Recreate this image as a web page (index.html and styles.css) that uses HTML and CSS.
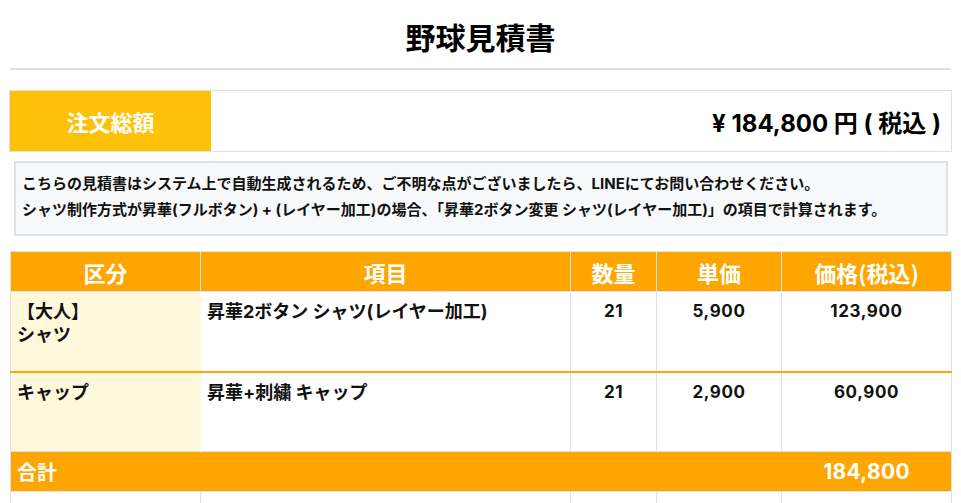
FILE: index.html
```html
<!DOCTYPE html>
<html lang="ja">
<head>
<meta charset="utf-8">
<title>野球見積書</title>
<link rel="stylesheet" href="styles.css">
</head>
<body>
<div class="page">
  <h1 class="title">野球見積書</h1>
  <hr class="rule">
  <div class="total-box">
    <div class="total-label">注文総額</div>
    <div class="total-value">¥ 184,800 円 ( 税込 )</div>
  </div>
  <div class="notice">
    <p>こちらの見積書はシステム上で自動生成されるため、ご不明な点がございましたら、LINEにてお問い合わせください。</p>
    <p>シャツ制作方式が昇華(フルボタン) + (レイヤー加工)の場合、「昇華2ボタン変更 シャツ(レイヤー加工)」の項目で計算されます。</p>
  </div>
  <table class="quote">
    <colgroup>
      <col class="c-kind">
      <col class="c-item">
      <col class="c-qty">
      <col class="c-unit">
      <col class="c-price">
    </colgroup>
    <thead>
      <tr>
        <th>区分</th>
        <th>項目</th>
        <th>数量</th>
        <th>単価</th>
        <th>価格(税込)</th>
      </tr>
    </thead>
    <tbody>
      <tr class="row-first">
        <td class="kind">【大人】<br>シャツ</td>
        <td>昇華2ボタン シャツ(レイヤー加工)</td>
        <td class="num">21</td>
        <td class="num">5,900</td>
        <td class="num">123,900</td>
      </tr>
      <tr class="row-second">
        <td class="kind">キャップ</td>
        <td>昇華+刺繍 キャップ</td>
        <td class="num">21</td>
        <td class="num">2,900</td>
        <td class="num">60,900</td>
      </tr>
      <tr class="row-sum">
        <td colspan="4" class="sum-label">合計</td>
        <td class="sum-value">184,800</td>
      </tr>
      <tr class="row-blank">
        <td></td><td></td><td></td><td></td><td></td>
      </tr>
    </tbody>
  </table>
</div>
</body>
</html>
```
FILE: styles.css
```css
* { box-sizing: border-box; }
html, body { margin: 0; padding: 0; background: #fff; }
body {
  font-family: Inter, "Noto Sans CJK JP", sans-serif;
  color: #111;
}
.page { padding: 0 10px; }

.title {
  margin: 0;
  padding-top: 18px;
  height: 56px;
  text-align: center;
  font-size: 30px;
  line-height: 36px;
  font-weight: 700;
  font-family: "Noto Sans CJK JP", sans-serif;
  color: #000;
}
.rule {
  margin: 12px 0 0;
  border: 0;
  height: 2px;
  background: #dee2e6;
}

.total-box {
  margin: 20px -1px 0;
  display: flex;
  border: 1px solid #dee2e6;
  height: 62px;
}
.total-label {
  width: 201px;
  background: #ffc107;
  color: #fff;
  font-weight: 700;
  font-size: 22px;
  display: flex;
  align-items: center;
  justify-content: center;
  font-family: "Noto Sans CJK JP", sans-serif;
}
.total-value {
  flex: 1;
  display: flex;
  align-items: center;
  justify-content: flex-end;
  padding-right: 10px;
  font-size: 24px;
  font-weight: 700;
  color: #000;
}

.notice {
  margin: 9px 3px 0 4px;
  border: 2px solid #dee2e6;
  background: #f8f9fa;
  padding: 8px 6px 11px;
  font-size: 15px;
  font-weight: 700;
  line-height: 26px;
  color: #111;
}
.notice p { margin: 0; }

.quote {
  margin-top: 15px;
  width: 941px;
  border-collapse: collapse;
  table-layout: fixed;
}
.c-kind { width: 190px; }
.c-item { width: 370px; }
.c-qty { width: 86px; }
.c-unit { width: 125px; }
.c-price { width: 170px; }

.quote th {
  background: #ffa500;
  color: #fff;
  font-size: 22px;
  font-weight: 700;
  height: 40px;
  padding: 0;
  text-align: center;
  border: 1px solid #dee2e6;
  font-family: "Noto Sans CJK JP", sans-serif;
}
.quote td {
  border-left: 1px solid #dee2e6;
  border-right: 1px solid #dee2e6;
  vertical-align: top;
  padding: 8px 6px;
  font-size: 18px;
  font-weight: 700;
  line-height: 23px;
  color: #111;
}
.quote td.kind {
  background: #fff8dc;
  border-right-color: #fff8dc;
}
.quote td.num {
  text-align: center;
  font-size: 17px;
  letter-spacing: 0.6px;
}
.row-first td { height: 80px; border-bottom: 2px solid #ffa500; }
.row-second td { height: 80px; }
.row-sum td {
  background: #ffa500;
  color: #fff;
  height: 40px;
  vertical-align: middle;
  padding: 0 6px;
  border-top: 1px solid #dee2e6;
  border-bottom: 1px solid #dee2e6;
  font-size: 20px;
}
.row-sum td.sum-label { border-right-color: #ffa500; font-family: "Noto Sans CJK JP", sans-serif; }
.row-sum td.sum-value { text-align: center; font-size: 21px; letter-spacing: 0.3px; }
.row-blank td { height: 40px; }
```
